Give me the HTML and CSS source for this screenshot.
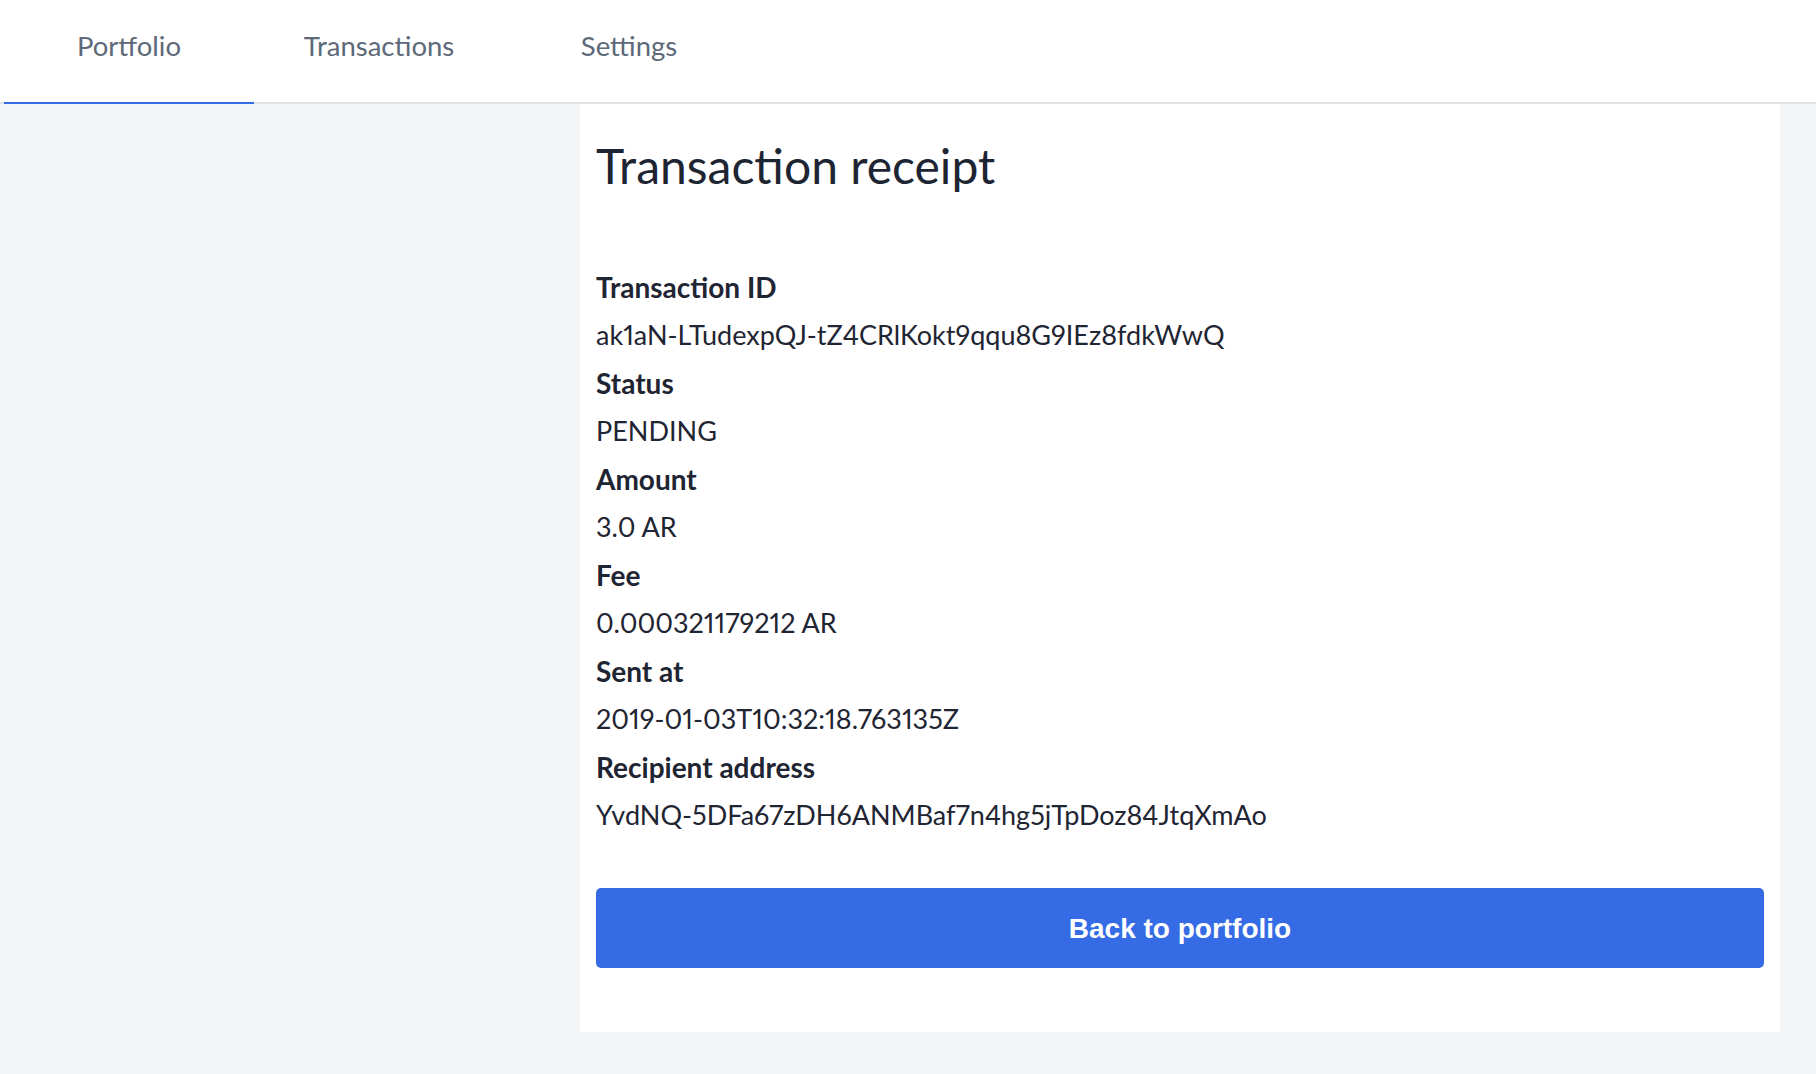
FILE: index.html
```html
<!DOCTYPE html>
<html lang="en">
<head>
<meta charset="utf-8">
<title>Transaction receipt</title>
<link rel="stylesheet" href="styles.css">
</head>
<body>
<nav class="tabs">
  <a class="tab active">Portfolio</a>
  <a class="tab">Transactions</a>
  <a class="tab">Settings</a>
</nav>
<main class="layout">
  <div class="side"></div>
  <section class="card">
    <h1 class="title">Transaction receipt</h1>
    <dl class="fields">
      <dt class="label">Transaction ID</dt>
      <dd class="value">ak1aN-LTudexpQJ-tZ4CRlKokt9qqu8G9IEz8fdkWwQ</dd>
      <dt class="label">Status</dt>
      <dd class="value">PENDING</dd>
      <dt class="label">Amount</dt>
      <dd class="value">3.0 AR</dd>
      <dt class="label">Fee</dt>
      <dd class="value">0.000321179212 AR</dd>
      <dt class="label">Sent at</dt>
      <dd class="value">2019-01-03T10:32:18.763135Z</dd>
      <dt class="label">Recipient address</dt>
      <dd class="value">YvdNQ-5DFa67zDH6ANMBaf7n4hg5jTpDoz84JtqXmAo</dd>
    </dl>
    <button class="btn" type="button">Back to portfolio</button>
  </section>
</main>
</body>
</html>
```
FILE: styles.css
```css
* { box-sizing: border-box; }
html, body { margin: 0; padding: 0; }
body {
  background: #f4f5f7;
  font-family: "Lato", "Open Sans", sans-serif;
  color: #1f2532;
  min-height: 1074px;
}
.tabs {
  display: flex;
  background: #ffffff;
  padding-left: 4px;
  border-bottom: 2px solid #dfe2e6;
  height: 104px;
}
.tab {
  width: 250px;
  height: 104px;
  margin-bottom: -2px;
  padding-top: 29px;
  text-align: center;
  font-size: 27.5px;
  line-height: 34px;
  color: #5d6978;
  border-bottom: 2px solid transparent;
  cursor: pointer;
}
.tab.active { border-bottom-color: #356ce6; }
.layout {
  display: grid;
  grid-template-columns: 580px 1200px;
  padding-bottom: 42px;
}
.card {
  background: #ffffff;
  padding: 33px 16px 64px;
}
.title {
  margin: 0;
  font-size: 48px;
  font-weight: 400;
  line-height: 58px;
  color: #1d2533;
}
.fields {
  margin: 68px 0 0;
}
.label {
  font-size: 28px;
  font-weight: 700;
  line-height: 48px;
  color: #1f2532;
}
.value {
  margin: 0;
  font-size: 27px;
  line-height: 48px;
  color: #1f2532;
  font-variant-numeric: proportional-nums;
}
.btn {
  display: block;
  width: 100%;
  height: 80px;
  margin-top: 49px;
  padding-top: 2px;
  border: none;
  border-radius: 5px;
  background: #356ce6;
  color: #ffffff;
  font-family: "Liberation Sans", Arial, sans-serif;
  font-weight: 700;
  font-size: 28px;
  cursor: pointer;
}
```
